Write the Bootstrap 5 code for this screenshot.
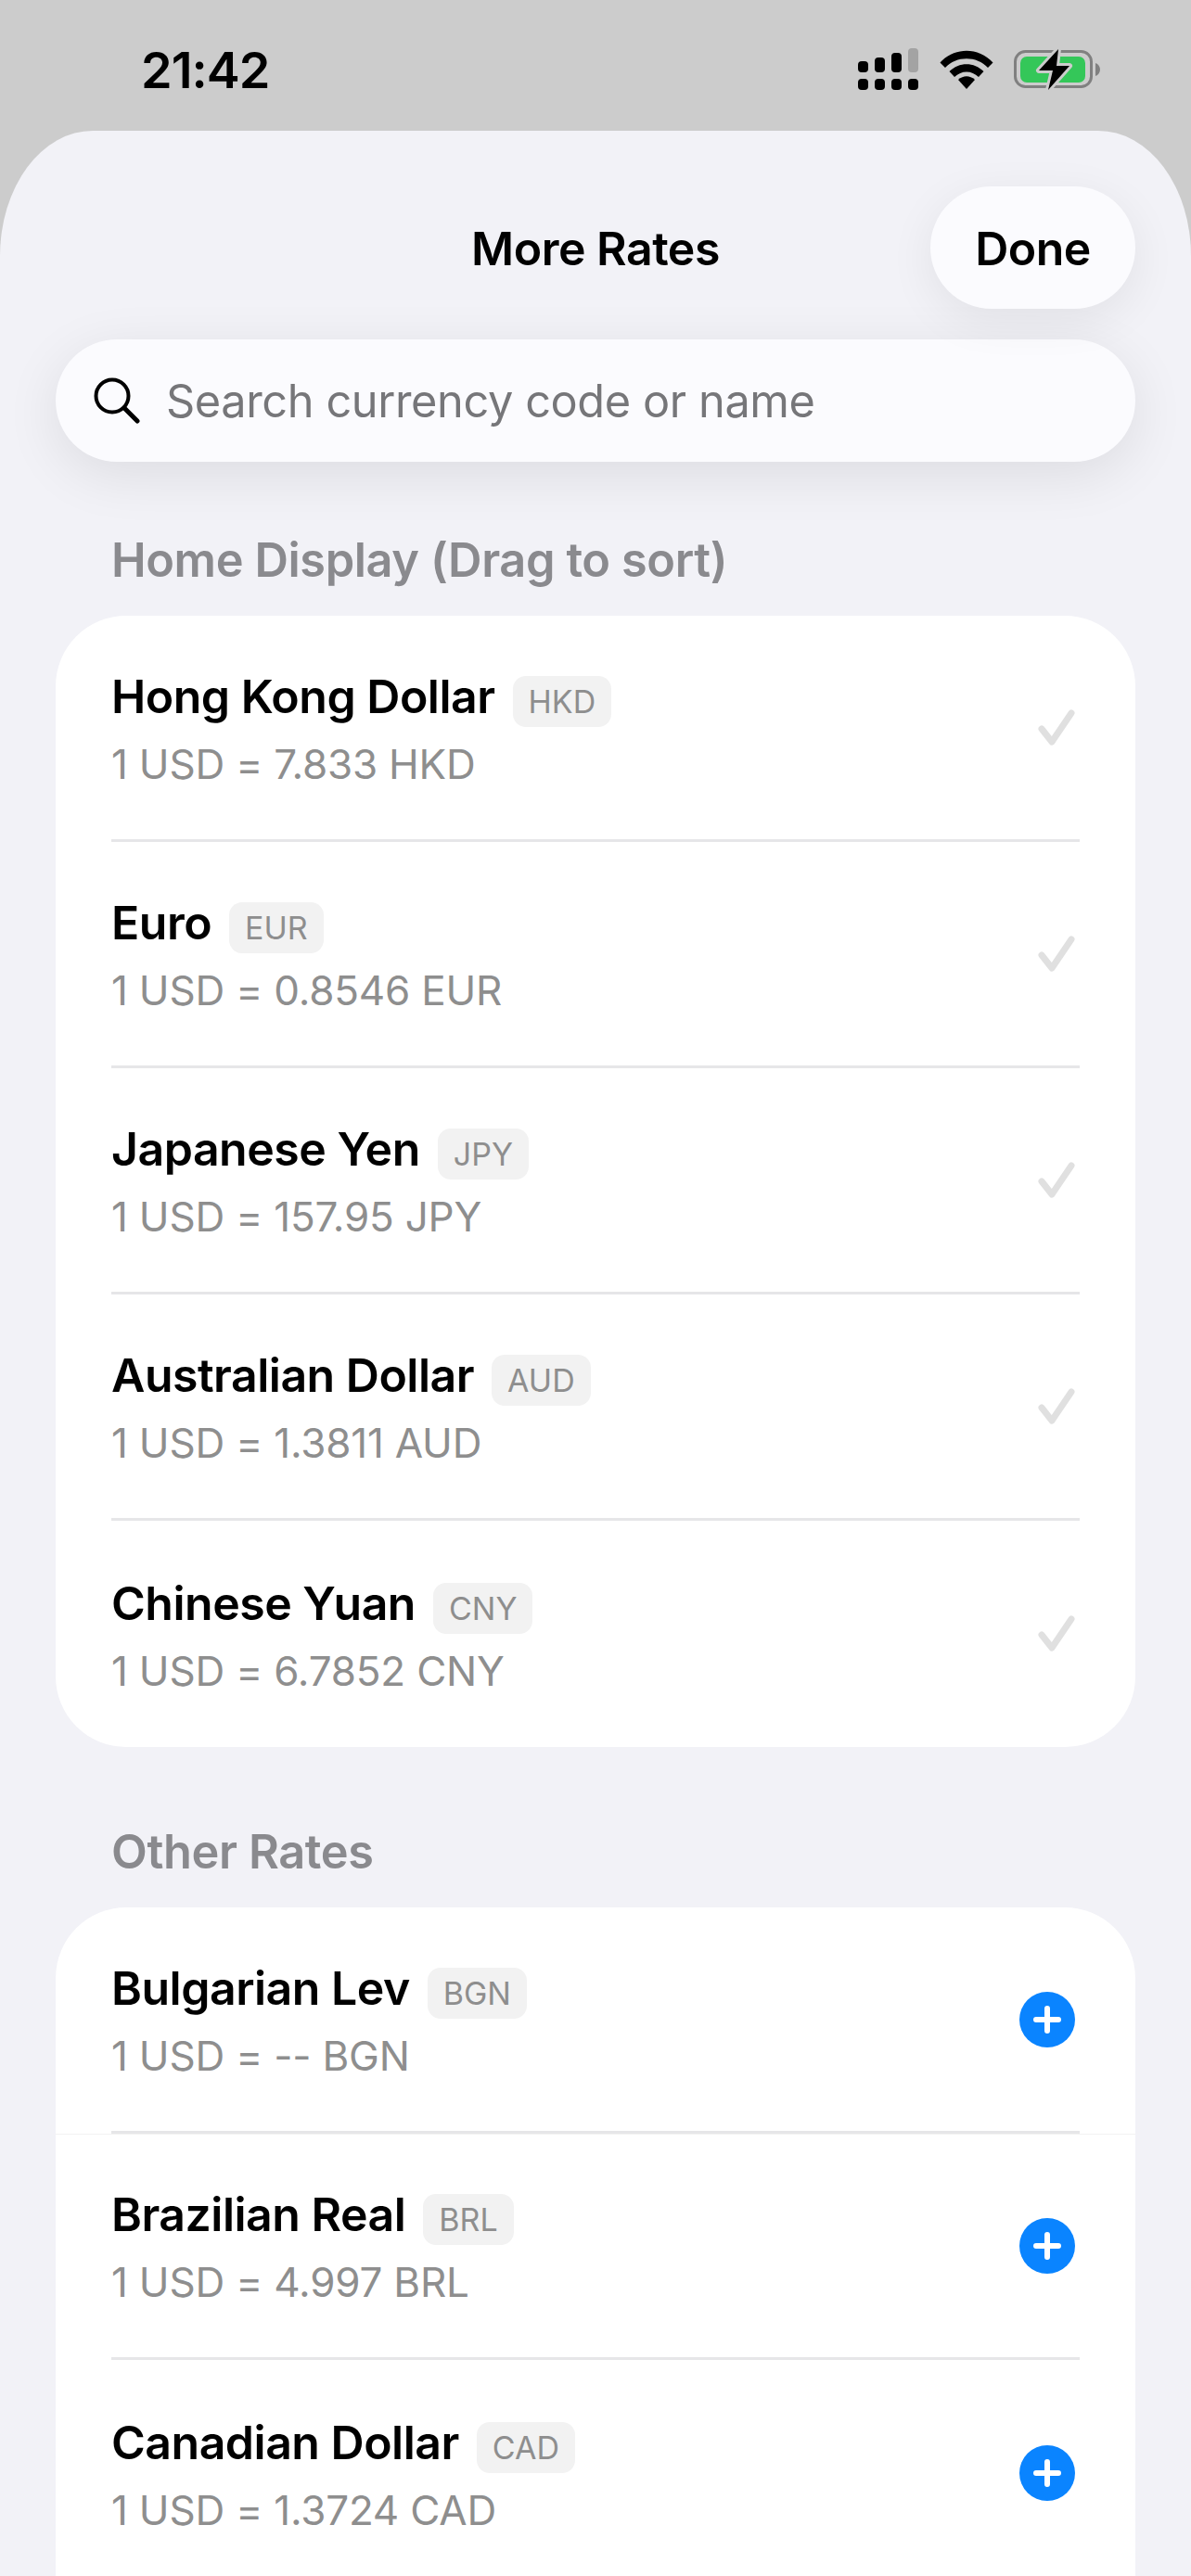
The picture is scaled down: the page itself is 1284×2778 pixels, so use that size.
<!DOCTYPE html>
<html lang="en">
<head>
    <meta charset="UTF-8">
    <meta name="viewport" content="width=device-width, initial-scale=1.0">
    <title>More Rates</title>
    <link href="https://cdn.jsdelivr.net/npm/bootstrap@5.3.3/dist/css/bootstrap.min.css" rel="stylesheet">
    <style>
        html, body {
            height: 2778px;
            overflow: hidden;
        }
        body {
            background: #cccccc;
            color: #000;
            font-family: Inter, "Noto Sans", sans-serif;
        }
        .status-bar {
            height: 141px;
            padding: 0 97px 0 152px;
        }
        .status-time {
            font-size: 54px;
            font-weight: 600;
            line-height: 1;
            letter-spacing: -1px;
            margin-top: 10px;
        }
        .status-icons {
            margin-top: 9px;
            gap: 22px;
        }
        .sheet {
            background: #f2f2f7;
            border-radius: 100px 100px 0 0 / 135px 135px 0 0;
            height: 2637px;
            overflow: hidden;
        }
        .sheet-head {
            display: grid;
            grid-template-columns: 1fr auto 1fr;
            align-items: center;
            margin: 60px 60px 0;
        }
        .sheet-title {
            font-size: 50px;
            font-weight: 600;
            letter-spacing: -0.5px;
            padding-top: 2px;
        }
        .done-btn {
            width: 221px;
            height: 132px;
            border-radius: 66px;
            background: #fbfbfe;
            border: 0;
            color: #000;
            font-size: 50px;
            font-weight: 600;
            letter-spacing: -0.5px;
            padding: 2px 0 0;
            box-shadow: 0 12px 50px rgba(0, 0, 0, .07);
        }
        .search-box {
            height: 132px;
            margin: 33px 60px 0;
            padding-left: 41px;
            border-radius: 66px;
            background: #fbfbfe;
            box-shadow: 0 14px 60px rgba(0, 0, 0, .09);
            gap: 28px;
        }
        .search-text {
            font-size: 48.700px;
            color: #767679;
            letter-spacing: -0.4px;
            padding-top: 2px;
        }
        .section-label {
            margin: 76px 60px 30px 120px;
            font-size: 50.500px;
            line-height: 60px;
            font-weight: 600;
            color: #8a8a8e;
            letter-spacing: -0.4px;
        }
        .section-label.second {
            margin-top: 83px;
        }
        .rate-card {
            margin: 0 60px;
            background: #fff;
            border-radius: 76px;
            overflow: hidden;
        }
        .rate-card.open-end {
            border-radius: 76px 76px 0 0;
        }
        .rate-item {
            background: transparent;
            color: #000;
        }
        .rate-row {
            height: 244px;
            margin: 0 60px 0 60px;
            padding-right: 5px;
            border-bottom: 3px solid #e6e6e8;
        }
        .rate-item:last-child .rate-row {
            border-bottom: 0;
        }
        .rate-item.seam {
            box-shadow: 0 1px 0 #f2f2f2;
        }
        .rate-name {
            font-size: 50px;
            line-height: 55px;
            margin-top: 5px;
            font-weight: 600;
            letter-spacing: -0.5px;
        }
        .rate-code {
            display: inline-block;
            height: 55px;
            line-height: 55px;
            padding: 0 17px;
            margin-left: 19px;
            margin-top: 10px;
            border-radius: 14px;
            background: #f2f2f2;
            color: #8e8e8e;
            font-size: 34px;
        }
        .rate-value {
            margin-top: 14px;
            font-size: 44px;
            line-height: 52px;
            color: #8e8e8e;
            letter-spacing: -0.2px;
        }
    </style>
</head>
<body>
    <div class="status-bar d-flex justify-content-between align-items-center">
        <div class="status-time">21:42</div>
        <div class="status-icons d-flex align-items-center">
            <!-- signal -->
            <svg width="66" height="46" viewBox="0 0 66 46">
                <rect x="0" y="14" width="11" height="12" rx="4" fill="#000"/>
                <rect x="18" y="10" width="11" height="16" rx="4" fill="#000"/>
                <rect x="36" y="5" width="11" height="21" rx="4" fill="#000"/>
                <rect x="54" y="0" width="11" height="26" rx="4" fill="#a3a3a3"/>
                <rect x="0" y="33" width="11" height="12" rx="4" fill="#000"/>
                <rect x="18" y="33" width="11" height="12" rx="4" fill="#000"/>
                <rect x="36" y="33" width="11" height="12" rx="4" fill="#000"/>
                <rect x="54" y="33" width="11" height="12" rx="4" fill="#000"/>
            </svg>
            <!-- wifi -->
            <svg width="58" height="42" viewBox="0 0 58 42">
                <path d="M0.5 13.5C16 -3.5 42 -3.5 57.5 13.5L52 19C40 6 18 6 6 19Z" fill="#000"/>
                <path d="M10.5 23C21 12.5 37 12.5 47.5 23L42 29C34.500 21.500 23.500 21.500 16 29Z" fill="#000"/>
                <path d="M20 32C25.500 27 32.500 27 38 32L29 42Z" fill="#000"/>
            </svg>
            <!-- battery -->
            <svg width="94" height="46" viewBox="0 0 94 46">
                <rect x="1.500" y="3.500" width="82" height="38" rx="11" fill="none" stroke="#808080" stroke-width="3"/>
                <rect x="7" y="9" width="70" height="28" rx="7" fill="#34c759"/>
                <path d="M88 16C91 17 93 20 93 23C93 26 91 29 88 30Z" fill="#808080"/>
                <path d="M48 1L27 24H42L37 45L60 19H46Z" fill="#000" stroke="#cccccc" stroke-width="6" stroke-linejoin="round" paint-order="stroke"/>
            </svg>
        </div>
    </div>

    <div class="sheet">
        <div class="sheet-head">
            <div></div>
            <div class="sheet-title">More Rates</div>
            <div class="text-end">
                <button type="button" class="btn done-btn">Done</button>
            </div>
        </div>

        <div class="search-box d-flex align-items-center">
            <svg width="50" height="50" viewBox="0 0 50 50">
                <circle cx="20" cy="20" r="17.500" fill="none" stroke="#000" stroke-width="4"/>
                <path d="M33 33L47 47" stroke="#000" stroke-width="5" stroke-linecap="round"/>
            </svg>
            <div class="search-text">Search currency code or name</div>
        </div>

        <div class="section-label">Home Display (Drag to sort)</div>
        <ul class="list-group rate-card" id="home-list"></ul>

        <div class="section-label second">Other Rates</div>
        <ul class="list-group rate-card open-end" id="other-list"></ul>
    </div>

    <script>
        const homeRates = [
            ["Hong Kong Dollar", "HKD", "7.833"],
            ["Euro", "EUR", "0.8546"],
            ["Japanese Yen", "JPY", "157.95"],
            ["Australian Dollar", "AUD", "1.3811"],
            ["Chinese Yuan", "CNY", "6.7852"]
        ];
        const otherRates = [
            ["Bulgarian Lev", "BGN", "--"],
            ["Brazilian Real", "BRL", "4.997"],
            ["Canadian Dollar", "CAD", "1.3724"]
        ];

        const checkIcon = `<svg width="40" height="40" viewBox="0 0 40 40"><path d="M4 21L15 35L36 4" fill="none" stroke="#e0e0e0" stroke-width="7" stroke-linecap="round" stroke-linejoin="round"/></svg>`;
        const plusIcon = `<svg width="60" height="60" viewBox="0 0 60 60"><circle cx="30" cy="30" r="30" fill="#0a84ff"/><path d="M30 18V42M18 30H42" stroke="#fff" stroke-width="6" stroke-linecap="round"/></svg>`;

        // Build both lists from the same row markup
        function renderRows(id, rates, icon) {
            document.getElementById(id).innerHTML = rates.map((r, i) => `
                <li class="list-group-item rate-item border-0 p-0${id === "other-list" && i === 0 ? " seam" : ""}">
                    <div class="rate-row d-flex justify-content-between align-items-center">
                        <div>
                            <div class="d-flex align-items-start">
                                <span class="rate-name">${r[0]}</span>
                                <span class="rate-code">${r[1]}</span>
                            </div>
                            <div class="rate-value">1 USD = ${r[2]} ${r[1]}</div>
                        </div>
                        ${icon}
                    </div>
                </li>`).join("");
        }

        renderRows("home-list", homeRates, checkIcon);
        renderRows("other-list", otherRates, plusIcon);
    </script>

    <script src="https://cdn.jsdelivr.net/npm/bootstrap@5.3.3/dist/js/bootstrap.bundle.min.js"></script>
</body>
</html>
